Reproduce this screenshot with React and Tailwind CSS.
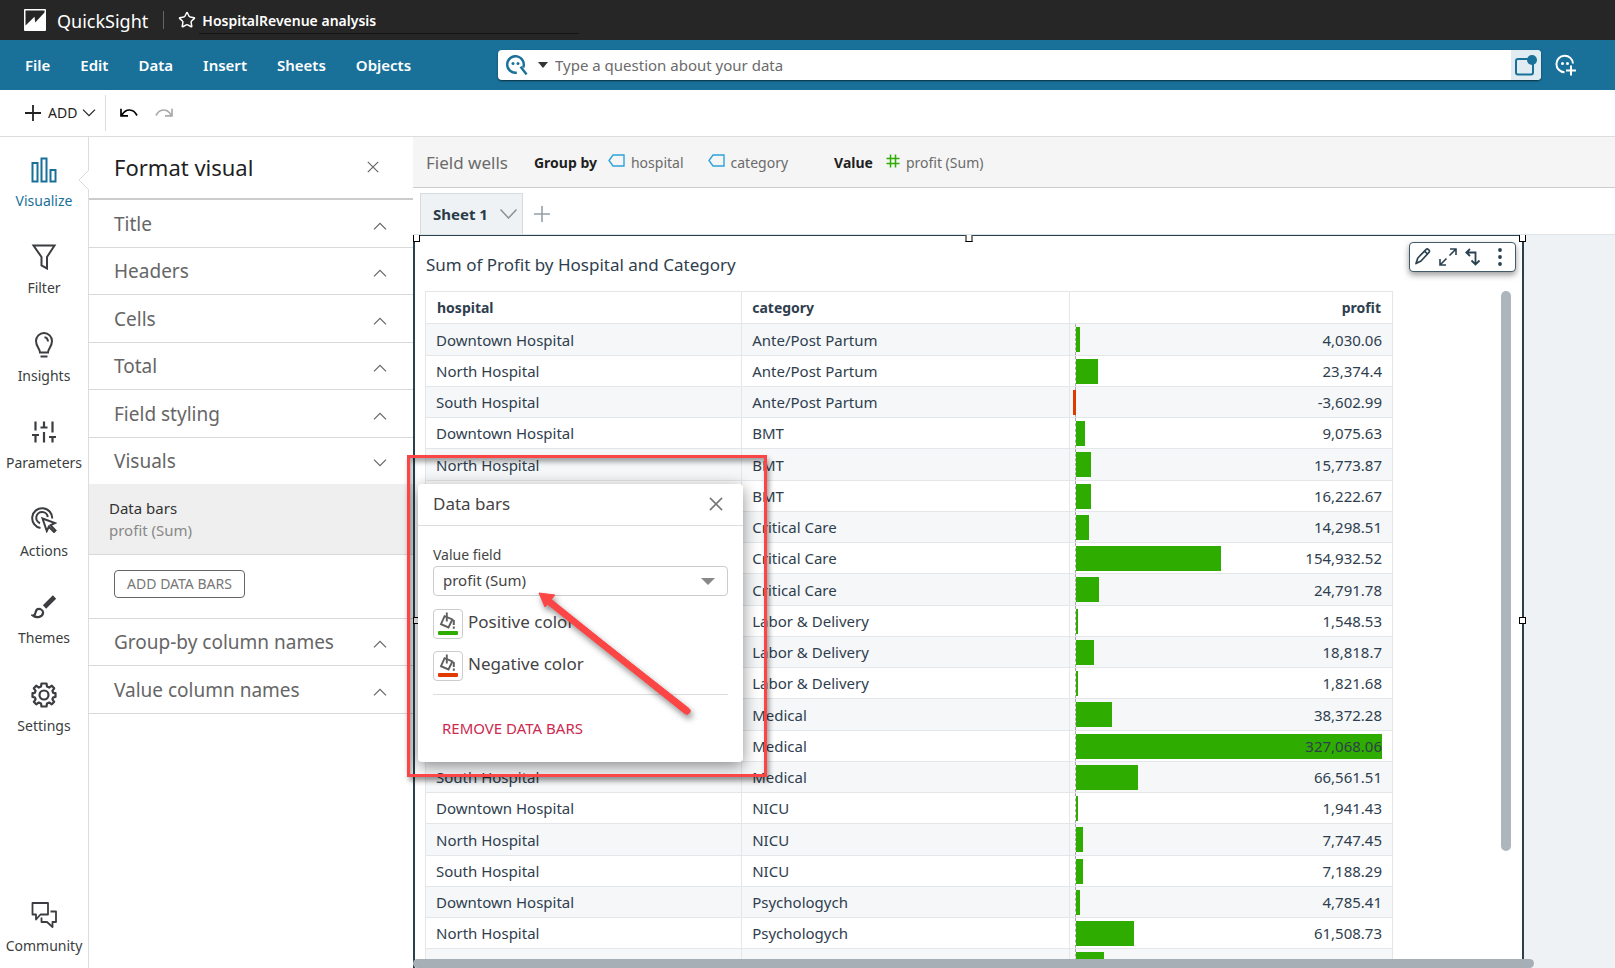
import React, { useState } from "react";
import { Star } from "lucide-react";

const MENU = ["File", "Edit", "Data", "Insert", "Sheets", "Objects"];

const ROWS = [
  { hospital: "Downtown Hospital", category: "Ante/Post Partum", profit: 4030.06 },
  { hospital: "North Hospital", category: "Ante/Post Partum", profit: 23374.4 },
  { hospital: "South Hospital", category: "Ante/Post Partum", profit: -3602.99 },
  { hospital: "Downtown Hospital", category: "BMT", profit: 9075.63 },
  { hospital: "North Hospital", category: "BMT", profit: 15773.87 },
  { hospital: "", category: "BMT", profit: 16222.67 },
  { hospital: "", category: "Critical Care", profit: 14298.51 },
  { hospital: "", category: "Critical Care", profit: 154932.52 },
  { hospital: "", category: "Critical Care", profit: 24791.78 },
  { hospital: "", category: "Labor & Delivery", profit: 1548.53 },
  { hospital: "", category: "Labor & Delivery", profit: 18818.7 },
  { hospital: "", category: "Labor & Delivery", profit: 1821.68 },
  { hospital: "", category: "Medical", profit: 38372.28 },
  { hospital: "", category: "Medical", profit: 327068.06 },
  { hospital: "South Hospital", category: "Medical", profit: 66561.51 },
  { hospital: "Downtown Hospital", category: "NICU", profit: 1941.43 },
  { hospital: "North Hospital", category: "NICU", profit: 7747.45 },
  { hospital: "South Hospital", category: "NICU", profit: 7188.29 },
  { hospital: "Downtown Hospital", category: "Psychologych", profit: 4785.41 },
  { hospital: "North Hospital", category: "Psychologych", profit: 61508.73 },
];

const MAX_PROFIT = 327068.06;

/* ---------- icons ---------- */

const Chevron = ({ up, className = "" }) => (
  <svg width="14" height="8" viewBox="0 0 14 8" fill="none" stroke="currentColor" className={className}>
    <path d={up ? "M1 7.3L7 1.3L13 7.3" : "M1 0.7L7 6.7L13 0.7"} strokeWidth="1.2" />
  </svg>
);

const Close = ({ size = 12, width = 1.2 }) => (
  <svg width={size} height={size} viewBox="0 0 12 12" fill="none" stroke="currentColor" strokeWidth={width}>
    <path d="M0.8 0.8L11.2 11.2M11.2 0.8L0.8 11.2" />
  </svg>
);

const Logo = () => (
  <svg width="22" height="22" viewBox="0 0 22 22">
    <rect width="22" height="22" rx="1" fill="#fff" />
    <path d="M1.5 1.5H20.5V3.5L11.2 13.5L10.5 7.8L1.5 16.5Z" fill="#262626" />
  </svg>
);

const VisualizeIcon = () => (
  <svg width="26" height="26" viewBox="0 0 26 26" fill="none" stroke="currentColor" strokeWidth="2">
    <path d="M1.5 6H6.5V24.5H1.5ZM10.5 1.5H15.5V24.5H10.5ZM19.5 13H24.5V24.5H19.5Z" />
  </svg>
);

const FilterIcon = () => (
  <svg width="26" height="26" viewBox="0 0 26 26" fill="none" stroke="currentColor" strokeWidth="2">
    <path d="M2.5 1.5H23.5L16 13V24.5L10.5 21.5V13Z" />
  </svg>
);

const InsightsIcon = () => (
  <svg width="26" height="26" viewBox="0 0 26 26" fill="none" stroke="currentColor" strokeWidth="2">
    <path d="M9 20.5C9 17 5 14.5 5 9A8 8 0 0 1 21 9C21 14.5 17 17 17 20.5Z" />
    <path d="M13.5 5.3C16 5.5 16.8 7.2 17 9.5" />
    <path d="M9.5 24.5H16.5" />
  </svg>
);

const ParametersIcon = () => (
  <svg width="26" height="26" viewBox="0 0 26 26" fill="none" stroke="currentColor" strokeWidth="2.2">
    <path d="M4.5 2.5V11.5M4.5 16V23.5M1 16H8M13 2.5V8.5M13 13V23.5M9.5 8.5H16.5M21.5 2.5V13.5M21.5 18V23.5M18 18H25" />
  </svg>
);

const ActionsIcon = () => (
  <svg width="26" height="26" viewBox="0 0 26 26" fill="none" stroke="currentColor" strokeWidth="2">
    <path d="M9.5 21A10 10 0 1 1 21.2 11.5" />
    <path d="M9 16.2A5.8 5.8 0 1 1 16.8 10" />
    <path d="M11.5 11.5L24 16L19.5 18.2L24.5 23.5L23 25L17.8 19.8L15.8 24Z" />
  </svg>
);

const ThemesIcon = () => (
  <svg width="26" height="26" viewBox="0 0 26 26" fill="none" stroke="currentColor" strokeWidth="2.2">
    <path d="M13.5 13L23.5 3" strokeWidth="4.6" />
    <path d="M2 21.5C5 21.5 4 17 6 15.5C8 14 12.5 15.5 12 19C11.5 23 6 24.5 2 21.5Z" />
  </svg>
);

const SettingsIcon = () => (
  <svg width="26" height="26" viewBox="0 0 26 26" fill="none" stroke="currentColor" strokeWidth="2.2" strokeLinejoin="round">
    <path d="M10.5 1.5H15.5L16 4.6L18.2 5.6L20.8 3.7L23.2 6.3L21.4 8.9L22.2 10.8L24.5 11.2V15L22.2 15.4L21.4 17.3L23.2 19.8L20.8 22.3L18.2 20.5L16 21.4L15.5 24.5H10.5L10 21.4L7.8 20.5L5.2 22.3L2.8 19.8L4.6 17.3L3.8 15.4L1.5 15V11.2L3.8 10.8L4.6 8.9L2.8 6.3L5.2 3.7L7.8 5.6L10 4.6Z" />
    <circle cx="13" cy="13" r="4.5" />
  </svg>
);

const CommunityIcon = () => (
  <svg width="26" height="26" viewBox="0 0 26 26" fill="none" stroke="currentColor" strokeWidth="1.8" strokeLinejoin="round">
    <path d="M1.5 1H17V12.5H9.5L5 17.5V12.5H1.5Z" />
    <path d="M19.5 9.5H25V20H21.5V25L16 20H10.5V15.5" />
  </svg>
);

const RAIL = [
  { name: "Visualize", Icon: VisualizeIcon },
  { name: "Filter", Icon: FilterIcon },
  { name: "Insights", Icon: InsightsIcon },
  { name: "Parameters", Icon: ParametersIcon },
  { name: "Actions", Icon: ActionsIcon },
  { name: "Themes", Icon: ThemesIcon },
  { name: "Settings", Icon: SettingsIcon },
];

const AskIcon = () => (
  <svg width="22" height="20" viewBox="0 0 22 20" fill="none" stroke="#19719a" strokeWidth="2.4">
    <path d="M10.8 17.7A8.3 8.3 0 1 1 17.2 12.6" />
    <path d="M14.6 11.8L20.6 19.4" />
    <circle cx="7" cy="8.6" r="1.5" fill="#19719a" stroke="none" />
    <circle cx="12" cy="8.6" r="1.5" fill="#19719a" stroke="none" />
  </svg>
);

const AddTopicIcon = () => (
  <svg width="22" height="22" viewBox="0 0 22 22" fill="none" stroke="#fff" strokeWidth="2">
    <path d="M9.5 18.3A8.3 8.3 0 1 1 18 9.5" />
    <path d="M16 11.5V21.5M11 16.5H21" />
    <circle cx="7.5" cy="9.5" r="1.5" fill="#fff" stroke="none" />
    <circle cx="12.5" cy="9.5" r="1.5" fill="#fff" stroke="none" />
  </svg>
);

const BoardIcon = () => (
  <svg width="22" height="22" viewBox="0 0 22 22" fill="none" stroke="#19719a" strokeWidth="2">
    <rect x="1" y="5" width="17" height="15.5" rx="2" />
    <circle cx="17" cy="6" r="5" fill="#19719a" stroke="none" />
  </svg>
);

const Undo = ({ flip }) => (
  <svg width="18" height="10" viewBox="0 0 18 10" fill="none" stroke="currentColor" strokeWidth="1.7">
    <path
      d={flip ? "M1 7.5C4.5 0.5 12 0 16 7M17 0.8V7.8H10" : "M17 7.5C13.5 0.5 6 0 2 7M1 0.8V7.8H8"}
    />
  </svg>
);

const TagIcon = () => (
  <svg width="17" height="13" viewBox="0 0 17 13" fill="none" stroke="#2ea3d9" strokeWidth="1.4" className="mb-1">
    <path d="M5 1H16V12H5L1 6.5Z" />
  </svg>
);

const HashIcon = () => (
  <svg width="14" height="14" viewBox="0 0 14 14" fill="none" stroke="#2eac00" strokeWidth="1.5" className="mb-1">
    <path d="M4.5 0.5V13.5M9.5 0.5V13.5M0.5 4.5H13.5M0.5 9.5H13.5" />
  </svg>
);

const BucketIcon = ({ color }) => (
  <svg width="22" height="24" viewBox="0 0 22 24" fill="none" stroke="#5f5f5f" strokeWidth="1.9">
    <path d="M7.6 4.2L4 12.2L11.5 15.4L15.4 7.4Z" />
    <path d="M9.8 0.5V9.5" />
    <path d="M16.8 8V13M16.8 14.5V16.8" strokeWidth="2" />
    <rect x="1" y="19" width="20" height="4" rx="1" fill={color} stroke="none" />
  </svg>
);

/* ---------- format panel ---------- */

const Section = ({ title, open, className = "" }) => (
  <button
    type="button"
    aria-expanded={!!open}
    className={`flex w-full shrink-0 items-center justify-between border-[#d9d9d9] pl-[25px] pr-[26px] text-left text-[#666] ${className}`}
  >
    <span className="text-[19px] leading-6">{title}</span>
    <Chevron up={!open} className="mt-1" />
  </button>
);

const FormatPanel = () => (
  <section className="flex w-[324px] shrink-0 flex-col bg-white">
    <div className="flex h-[63px] shrink-0 items-center justify-between border-b-2 border-[#ccc] pb-px pl-[25px] pr-[34px]">
      <h2 className="text-[22px] leading-7 text-[#1f1f1f]">Format visual</h2>
      <button type="button" aria-label="Close panel" className="text-[#666]">
        <Close size={12} />
      </button>
    </div>
    <Section title="Title" className="h-12 border-b" />
    <Section title="Headers" className="h-[47px] border-b" />
    <Section title="Cells" className="h-12 border-b" />
    <Section title="Total" className="h-[47px] border-b" />
    <Section title="Field styling" className="h-12 border-b" />
    <Section title="Visuals" open className="h-[46px]" />
    <div className="flex h-[71px] shrink-0 flex-col justify-center border-b border-[#d9d9d9] bg-[#efefef] pb-px pl-5 text-[15px] leading-[22px]">
      <span className="text-[#333]">Data bars</span>
      <span className="text-[#888]">profit (Sum)</span>
    </div>
    <div className="h-16 shrink-0 border-b border-[#d9d9d9] pl-[25px] pt-[15px]">
      <button
        type="button"
        className="h-7 w-[131px] rounded border border-[#666] text-[14px] leading-5 text-[#777]"
      >
        ADD DATA BARS
      </button>
    </div>
    <Section title="Group-by column names" className="h-[47px] border-b" />
    <Section title="Value column names" className="h-12 border-b" />
  </section>
);

/* ---------- data bars dialog ---------- */

const DataBarsDialog = () => {
  const [field, setField] = useState("profit");

  return (
    <div
      role="dialog"
      aria-label="Data bars"
      className="absolute left-[5px] top-[347px] z-20 h-[278px] w-[325px] rounded bg-white text-[#444] shadow-[0_4px_16px_rgba(0,0,0,0.45)]"
    >
      <div className="flex h-[42px] items-center justify-between border-b border-[#ddd] pb-[2px] pl-[15px] pr-5">
        <h3 className="text-[17px] leading-6">Data bars</h3>
        <button type="button" aria-label="Close" className="text-[#777]">
          <Close size={14} width={1.4} />
        </button>
      </div>
      <div className="px-[15px] pt-[19px]">
        <label htmlFor="value-field" className="block pb-px text-[14px] leading-5">
          Value field
        </label>
        <div className="relative">
          <select
            id="value-field"
            value={field}
            onChange={(e) => setField(e.target.value)}
            className="h-[30px] w-full appearance-none rounded border border-[#ccc] bg-white pb-px pl-[9px] text-[15px]"
          >
            <option value="profit">profit (Sum)</option>
          </select>
          <svg className="pointer-events-none absolute right-[13px] top-3" width="14" height="7" viewBox="0 0 14 7">
            <path d="M0 0H14L7 7Z" fill="#888" />
          </svg>
        </div>
        <div className="mt-[13px] flex flex-col gap-3 border-b border-[#ddd] pb-[13px]">
          <button type="button" className="flex items-start gap-[5px] text-left">
            <span className="flex size-[30px] items-center justify-center rounded border border-[#ccc]">
              <BucketIcon color="#2eac00" />
            </span>
            <span className="text-[17px] leading-[25px]">Positive color</span>
          </button>
          <button type="button" className="flex items-start gap-[5px] text-left">
            <span className="flex size-[30px] items-center justify-center rounded border border-[#ccc]">
              <BucketIcon color="#df3b00" />
            </span>
            <span className="text-[17px] leading-[25px]">Negative color</span>
          </button>
        </div>
        <button type="button" className="ml-[9px] mt-[23px] text-[15px] leading-5 text-[#cc2a50]">
          REMOVE DATA BARS
        </button>
      </div>
    </div>
  );
};

const Annotation = () => (
  <>
    <div className="pointer-events-none absolute left-[-6px] top-[318px] z-30 h-[322px] w-[360px] border-3 border-[#fc4545] shadow-[2px_4px_5px_rgba(0,0,0,0.4),inset_2px_4px_5px_rgba(0,0,0,0.35)]" />
    <svg
      className="pointer-events-none absolute left-[120px] top-[450px] z-30 drop-shadow-[2px_4px_3px_rgba(0,0,0,0.45)]"
      width="165"
      height="140"
      viewBox="0 0 165 140"
    >
      <path d="M15 13L153 124" stroke="#fc4545" strokeWidth="6" />
      <path d="M15 11L156 121.5A3 3 0 0 1 152 126.5L13 16Z" fill="#fc4545" stroke="#fc4545" />
      <path d="M6 6L22 8L12 20Z" fill="#fc4545" stroke="#fc4545" />
    </svg>
  </>
);

/* ---------- table visual ---------- */

const ProfitCell = ({ value, label = true }) => {
  const width = `${(Math.abs(value) / MAX_PROFIT) * 100}%`;
  return (
    <td className="relative border-b border-r border-[#e3e7ea] p-0 pr-[10px] text-right">
      <div className="absolute inset-y-0 left-[5px] right-[10px] border-l border-dashed border-[#aaa]">
        {value < 0 ? (
          <div className="absolute right-full top-[3px] h-[25px] min-w-[3px] bg-[#df3b00]" style={{ width }} />
        ) : (
          <div className="mt-[3px] h-[25px] min-w-[2px] bg-[#2eac00]" style={{ width }} />
        )}
      </div>
      {label && (
        <span className="relative">{value.toLocaleString("en-US", { maximumFractionDigits: 2 })}</span>
      )}
    </td>
  );
};

const DataTable = () => (
  <table className="w-full table-fixed border-separate border-spacing-0 border-l border-t border-[#e3e7ea] text-[15px] leading-5 text-[#2f3e4e]">
    <colgroup>
      <col className="w-[32.7%]" />
      <col className="w-[33.9%]" />
      <col />
    </colgroup>
    <thead>
      <tr className="h-8 text-[14px] font-bold">
        <th className="border-b border-r border-[#e3e7ea] p-0 pl-[11px] text-left">hospital</th>
        <th className="border-b border-r border-[#e3e7ea] p-0 pl-[10px] text-left">category</th>
        <th className="border-b border-r border-[#e3e7ea] p-0 pr-[11px] text-right">profit</th>
      </tr>
    </thead>
    <tbody>
      {ROWS.map((row, i) => (
        <tr key={i} className="h-[31px] odd:bg-[#f5f7f9] nth-[4n+1]:h-8">
          <td className="border-b border-r border-[#e3e7ea] p-0 pl-[10px]">{row.hospital}</td>
          <td className="border-b border-r border-[#e3e7ea] p-0 pl-[10px]">{row.category}</td>
          <ProfitCell value={row.profit} />
        </tr>
      ))}
      {/* next row, only its top edge is in view */}
      <tr className="h-8 bg-[#f5f7f9]">
        <td className="border-r border-[#e3e7ea]" />
        <td className="border-r border-[#e3e7ea]" />
        <ProfitCell value={30300} label={false} />
      </tr>
    </tbody>
  </table>
);

const Handle = ({ className }) => (
  <span className={`absolute z-10 h-[7px] w-[7px] border border-black bg-white ${className}`} />
);

const VisualToolbar = () => (
  <div className="absolute right-[6px] top-[6px] flex h-[30px] w-[107px] items-center rounded border border-[#435a69] bg-white pl-[5px] text-[#2a4150] shadow-[0_3px_6px_rgba(0,0,0,0.4)]">
    <button type="button" aria-label="Edit">
      <svg width="16" height="18" viewBox="0 0 16 18" fill="none" stroke="currentColor" strokeWidth="1.7" strokeLinejoin="round">
        <path d="M1 15.5L2.8 10L11.2 1.3C12.5 0.3 15 2.4 14.3 4L6 13ZM9.5 3.2L12.5 6" />
      </svg>
    </button>
    <button type="button" aria-label="Maximize" className="ml-2">
      <svg width="18" height="18" viewBox="0 0 18 18" fill="none" stroke="currentColor" strokeWidth="1.6">
        <path d="M11 1H17V7M17 1L10.5 7.5M7 17H1V11M1 17L7.5 10.5" />
      </svg>
    </button>
    <button type="button" aria-label="Drill" className="ml-2">
      <svg width="16" height="18" viewBox="0 0 16 18" fill="none" stroke="currentColor" strokeWidth="1.8">
        <path d="M1 4.5H10.5V16.5M5 1L1.3 4.5L5 8M6.5 12.5L10.5 16.5L14.5 12.5" />
      </svg>
    </button>
    <button type="button" aria-label="More options" className="ml-[17px]">
      <svg width="4" height="18" viewBox="0 0 4 18" fill="currentColor">
        <circle cx="2" cy="2" r="1.9" />
        <circle cx="2" cy="9" r="1.9" />
        <circle cx="2" cy="16" r="1.9" />
      </svg>
    </button>
  </div>
);

const Canvas = () => (
  <div className="relative min-h-0 flex-1 overflow-hidden bg-[#eef2f5]">
    <div className="relative mr-[91px] h-full border-x-2 border-t border-[#29404f] bg-white">
      <h3 className="pl-[11px] pt-[17px] text-[17px] leading-6 text-[#2f3e4e]">
        Sum of Profit by Hospital and Category
      </h3>
      <div className="mt-[14px] flex items-start pl-[10px] pr-[11px]">
        <div className="flex-1">
          <DataTable />
        </div>
        <div className="ml-[108px] h-[560px] w-[10px] rounded-full bg-[#adb6bd]" />
      </div>
      <VisualToolbar />
      <Handle className="-left-[2px] -top-px border-t-0" />
      <Handle className="left-1/2 -top-px -translate-x-1/2 border-t-0" />
      <Handle className="-right-[4px] -top-px border-t-0" />
      <Handle className="-left-[2px] top-[381px]" />
      <Handle className="-right-[4px] top-[381px]" />
    </div>
    <div className="absolute bottom-0 left-0 right-[81px] h-[9px] rounded-full bg-[#a5afb5]" />
  </div>
);

/* ---------- page ---------- */

const App = () => {
  const [question, setQuestion] = useState("");

  return (
    <div className="flex h-screen flex-col overflow-hidden bg-white font-['Noto_Sans',sans-serif] text-[#333]">
      <header className="flex h-10 shrink-0 items-center bg-[#262626] pl-6 text-white">
        <Logo />
        <span className="ml-[11px] pt-px text-[18px] leading-6">QuickSight</span>
        <span className="ml-[15px] h-[18px] w-px bg-[#666]" />
        <button type="button" aria-label="Favorite" className="ml-[14px]">
          <Star size={18} strokeWidth={2} />
        </button>
        <h1 className="ml-[3px] w-[380px] border-b border-[#141414] pb-[2px] pl-[3px] pt-[5px] text-[14px] font-semibold leading-5">
          HospitalRevenue analysis
        </h1>
      </header>

      <nav className="flex h-[50px] shrink-0 items-center bg-[#19719a] pl-[25px] pr-[38px] text-white">
        <div className="flex w-[473px] gap-[30px]">
          {MENU.map((item) => (
            <button key={item} type="button" className="text-[15px] font-semibold leading-5">
              {item}
            </button>
          ))}
        </div>
        <div className="flex h-[30px] flex-1 items-center overflow-hidden rounded bg-white pl-2 shadow-[0_1px_2px_rgba(0,0,0,0.6)]">
          <AskIcon />
          <svg className="ml-[10px]" width="10" height="6" viewBox="0 0 10 6">
            <path d="M0 0H10L5 6Z" fill="#333" />
          </svg>
          <input
            type="text"
            aria-label="Type a question about your data"
            placeholder="Type a question about your data"
            value={question}
            onChange={(e) => setQuestion(e.target.value)}
            className="ml-[7px] flex-1 text-[15px] outline-none placeholder:text-[#6b6b6b]"
          />
          <button type="button" aria-label="Pinboard" className="flex h-full w-[30px] items-center justify-center bg-[#e0ecf1]">
            <BoardIcon />
          </button>
        </div>
        <button type="button" aria-label="Create topic" className="ml-[14px]">
          <AddTopicIcon />
        </button>
      </nav>

      <div className="flex h-[47px] shrink-0 items-center border-b border-[#ddd] pl-[25px] text-[#222]">
        <button type="button" className="flex items-center text-[14px] leading-5">
          <svg width="16" height="16" viewBox="0 0 16 16" stroke="currentColor" strokeWidth="1.8">
            <path d="M8 0V16M0 8H16" />
          </svg>
          <span className="ml-[7px]">ADD</span>
          <Chevron className="ml-[5px]" />
        </button>
        <span className="ml-[9px] h-9 w-px bg-[#ddd]" />
        <button type="button" aria-label="Undo" className="ml-[14px] text-black">
          <Undo />
        </button>
        <button type="button" aria-label="Redo" className="ml-[17px] text-[#aaa]">
          <Undo flip />
        </button>
      </div>

      <div className="flex min-h-0 flex-1">
        <aside className="relative flex w-[89px] shrink-0 flex-col border-r border-[#ddd] pt-5 text-[#3b3d40]">
          {RAIL.map(({ name, Icon }) => (
            <button
              key={name}
              type="button"
              className={`flex shrink-0 flex-col items-center odd:h-[87px] even:h-[88px] ${
                name === "Visualize" ? "text-[#19719a]" : ""
              }`}
            >
              <Icon />
              <span className="mt-2 text-[14px] leading-5">{name}</span>
            </button>
          ))}
          <button type="button" className="mb-3 mt-auto flex flex-col items-center">
            <CommunityIcon />
            <span className="mt-2 text-[14px] leading-5">Community</span>
          </button>
          <svg className="absolute -right-px top-[33px]" width="11" height="20" viewBox="0 0 11 20" fill="#fff">
            <path d="M11 0L1 10L11 20" stroke="#ddd" />
          </svg>
        </aside>

        <FormatPanel />

        <main className="relative flex min-w-0 flex-1 flex-col">
          <div className="flex h-[51px] shrink-0 items-center border-b border-[#ccc] bg-[#f5f5f5] pl-[13px] pt-px text-[14px] leading-5 text-[#6b6b6b]">
            <span className="text-[17px]">Field wells</span>
            <span className="ml-[26px] font-bold text-[#1f1f1f]">Group by</span>
            <span className="ml-[11px] flex items-center gap-[6px]">
              <TagIcon />
              hospital
            </span>
            <span className="ml-[24px] flex items-center gap-[6px]">
              <TagIcon />
              category
            </span>
            <span className="ml-[46px] font-bold text-[#1f1f1f]">Value</span>
            <span className="ml-[13px] flex items-center gap-[6px]">
              <HashIcon />
              profit (Sum)
            </span>
          </div>

          <div className="flex h-[47px] shrink-0 items-end border-b border-[#dfe4e8] pl-[7px]">
            <button
              type="button"
              className="flex h-[41px] w-[103px] items-center border border-b-0 border-[#d5dbdf] bg-[#eef2f5] pl-3 text-[15px] font-bold leading-5 text-[#2a3b48]"
            >
              Sheet 1
              <svg className="ml-3" width="17" height="10" viewBox="0 0 17 10" fill="none" stroke="#879196" strokeWidth="1.5">
                <path d="M0.5 0.5L8.5 9L16.5 0.5" />
              </svg>
            </button>
            <button type="button" aria-label="Add sheet" className="mb-3 ml-[11px]">
              <svg width="16" height="16" viewBox="0 0 16 16" stroke="#95a0a8" strokeWidth="1.6">
                <path d="M8 0V16M0 8H16" />
              </svg>
            </button>
          </div>

          <Canvas />
          <DataBarsDialog />
          <Annotation />
        </main>
      </div>
    </div>
  );
};

export default App;
